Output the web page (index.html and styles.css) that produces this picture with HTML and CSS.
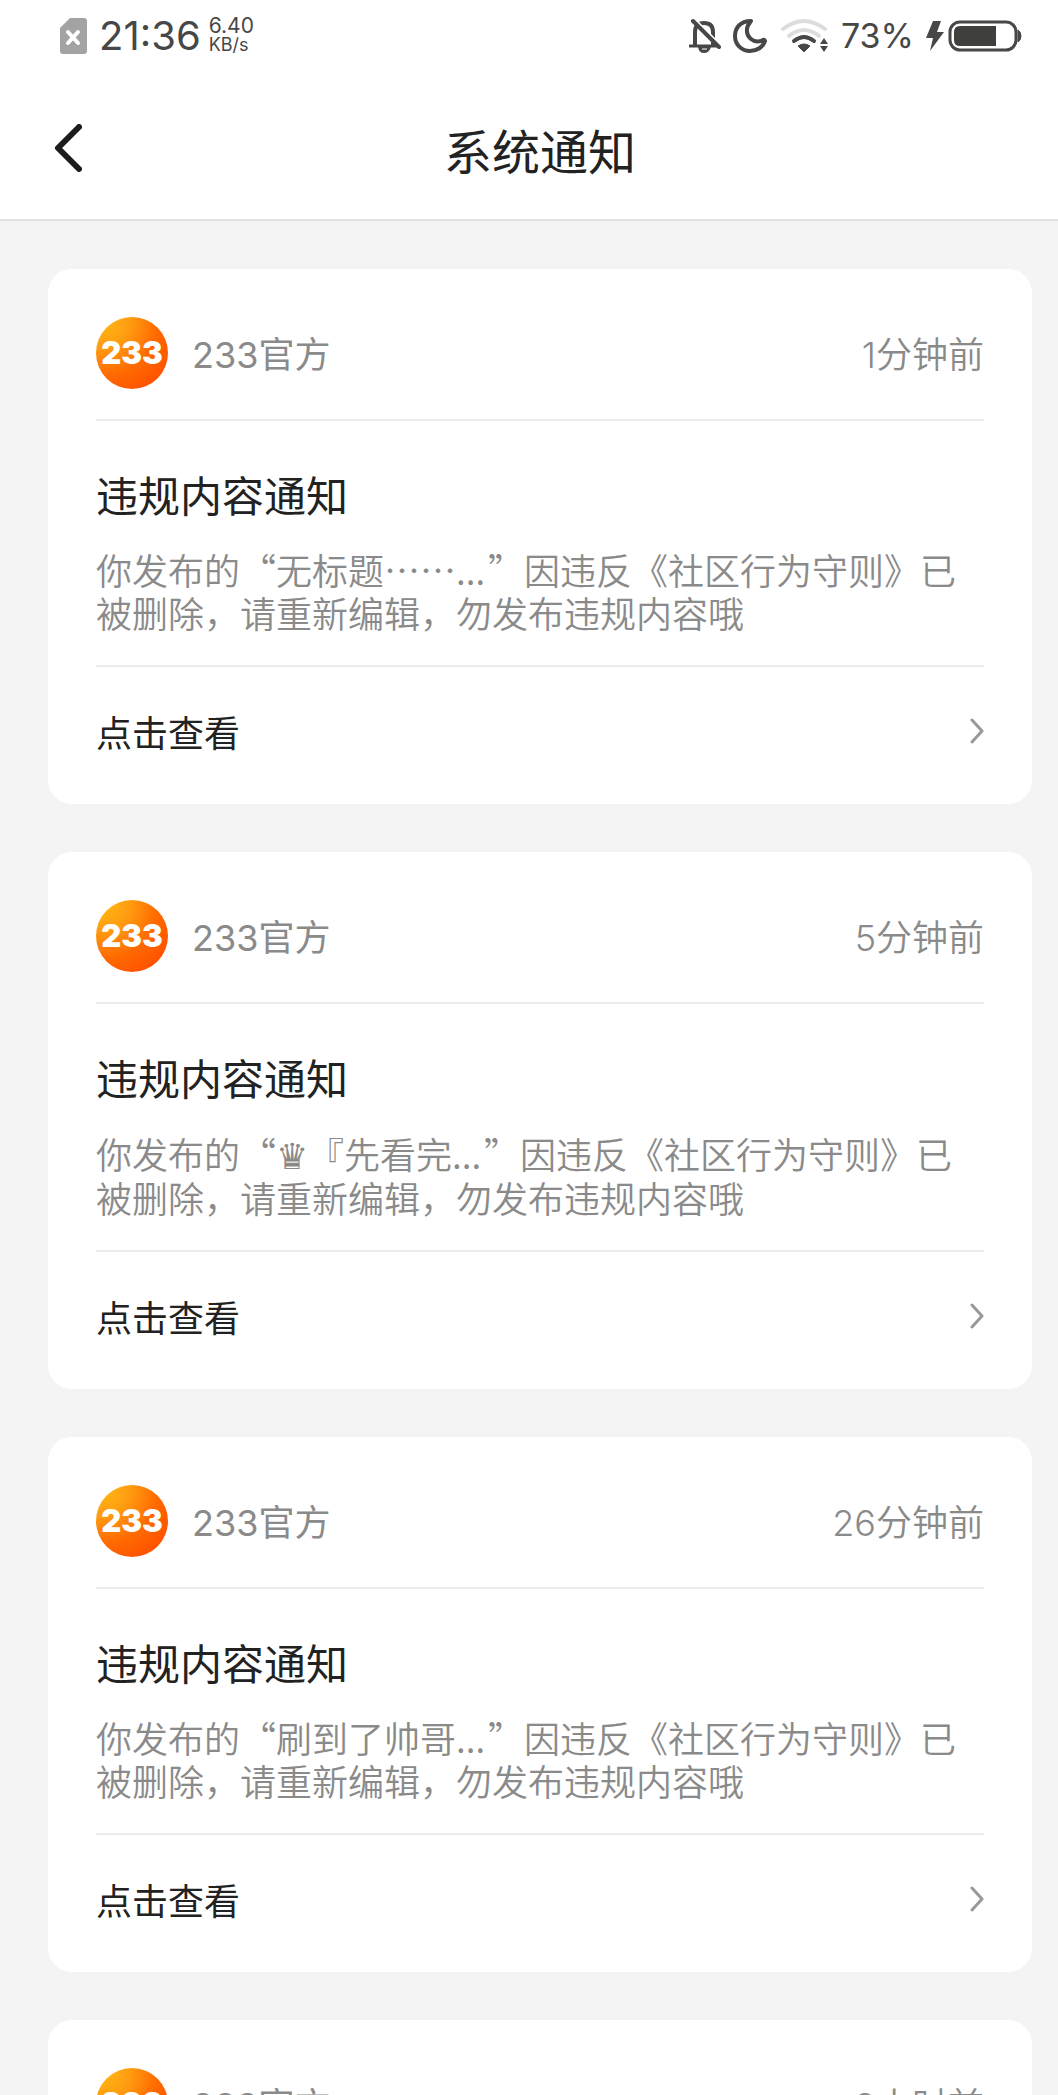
FILE: index.html
```html
<!DOCTYPE html>
<html lang="zh-CN">
<head>
<meta charset="utf-8">
<meta name="viewport" content="width=device-width, initial-scale=1">
<title>系统通知</title>
<link rel="stylesheet" href="styles.css">
</head>
<body>
<svg class="sprite" aria-hidden="true">
  <symbol id="chevron" viewBox="0 0 14 26"><path d="M2 2 L12 13 L2 24" fill="none" stroke="#999" stroke-width="3" stroke-linecap="round" stroke-linejoin="round"/></symbol>
</svg>
<div class="status">
  <div class="status-left">
    <svg width="27" height="36" viewBox="0 0 27 36" role="img" aria-label="无SIM卡"><path d="M10 0H24a3 3 0 0 1 3 3V33a3 3 0 0 1-3 3H3a3 3 0 0 1-3-3V10Z" fill="#a3a3a3"/><path d="M8 14 L18 25 M18 14 L8 25" stroke="#fff" stroke-width="4" stroke-linecap="round"/></svg>
    <span class="clock">21:36</span>
    <span class="speed"><span class="speed-value">6.40</span><span class="speed-unit">KB/s</span></span>
  </div>
  <div class="status-right">
    <svg width="32" height="36" viewBox="0 0 32 36" role="img" aria-label="静音"><g fill="none" stroke="#474747" stroke-width="4"><path d="M6 27V14Q6 5 15 5Q24 5 24 14V27"/><path d="M1 28H29" stroke-linecap="round" stroke-width="3"/></g><path d="M9 29H22Q20 35 15 35Q10 35 9 29Z" fill="#474747"/><path d="M13 31H18" stroke="#fff" stroke-width="1"/><path d="M5 1L31 27" stroke="#fff" stroke-width="3"/><path d="M4 3L30 29" stroke="#474747" stroke-width="4" stroke-linecap="round"/></svg>
    <svg class="moon" width="34" height="34" viewBox="0 0 34 34" role="img" aria-label="勿扰"><path d="M18 2C7 2 2 9 2 17C2 26 9 32 17 32C24 32 30 28 32 22C31 20 30 21 28 22C20 24 13 18 14 10C14 7 16 5 18 2Z" fill="none" stroke="#474747" stroke-width="4" stroke-linejoin="round"/></svg>
    <svg class="wifi" width="48" height="34" viewBox="0 0 48 34" role="img" aria-label="Wi-Fi"><g fill="none" stroke-linecap="round" stroke-width="4"><path d="M2 10Q23 -6 44 10" stroke="#ddd"/><path d="M8 17Q23 5 38 17" stroke="#ddd"/><path d="M13 22Q23 14 33 22" stroke="#474747"/></g><path d="M17 27Q23 23 29 27L23 33Z" fill="#474747" stroke="#474747" stroke-linejoin="round"/><path d="M43 19L47 25H39ZM39 27H47L43 33Z" fill="#474747"/></svg>
    <span class="percent">73%</span>
    <svg class="bolt" width="18" height="30" viewBox="0 0 18 30" role="img" aria-label="充电中"><path d="M7 0H15L11 11H18L4 30L7 17H0Z" fill="#474747"/></svg>
    <svg width="74" height="32" viewBox="0 0 74 32" role="img" aria-label="电量"><rect x="2" y="2" width="66" height="28" rx="10" fill="none" stroke="#474747" stroke-width="3"/><path d="M12 6H48V26H12Q6 26 6 20V12Q6 6 12 6Z" fill="#3f403b"/><path d="M70 10Q73 12 73 16Q73 20 70 22Z" fill="#474747" stroke="#474747"/></svg>
  </div>
</div>
<header class="bar">
  <button class="back" type="button" aria-label="返回"><svg width="28" height="48" viewBox="0 0 28 48"><path d="M25 3L4 24L25 45" fill="none" stroke="#1c1c1c" stroke-width="6" stroke-linecap="round" stroke-linejoin="round"/></svg></button>
  <h1>系统通知</h1>
</header>
<main class="list">
  <article class="card">
    <div class="from"><span class="avatar">233</span><span class="name">233官方</span><time>1分钟前</time></div>
    <div class="content"><h2>违规内容通知</h2><p>你发布的“无标题……<span class="dots">...</span>”因违反《社区行为守则》已被删除，请重新编辑，勿发布违规内容哦</p></div>
    <a class="more" href="#post-1">点击查看<svg width="14" height="26"><use href="#chevron"/></svg></a>
  </article>
  <article class="card">
    <div class="from"><span class="avatar">233</span><span class="name">233官方</span><time>5分钟前</time></div>
    <div class="content"><h2>违规内容通知</h2><p>你发布的“<span class="symbol">♛</span>『先看完<span class="dots">...</span>”因违反《社区行为守则》已被删除，请重新编辑，勿发布违规内容哦</p></div>
    <a class="more" href="#post-2">点击查看<svg width="14" height="26"><use href="#chevron"/></svg></a>
  </article>
  <article class="card">
    <div class="from"><span class="avatar">233</span><span class="name">233官方</span><time>26分钟前</time></div>
    <div class="content"><h2>违规内容通知</h2><p>你发布的“刷到了帅哥<span class="dots">...</span>”因违反《社区行为守则》已被删除，请重新编辑，勿发布违规内容哦</p></div>
    <a class="more" href="#post-3">点击查看<svg width="14" height="26"><use href="#chevron"/></svg></a>
  </article>
  <article class="card">
    <div class="from"><span class="avatar">233</span><span class="name">233官方</span><time>2小时前</time></div>
  </article>
</main>
</body>
</html>
```
FILE: styles.css
```css
* { box-sizing: border-box; }
body {
  margin: 0;
  height: 100vh;
  display: flex;
  flex-direction: column;
  overflow: hidden;
  background: #f4f4f4;
  color: #222;
  font-family: Inter, "Noto Sans CJK SC", sans-serif;
}
h1, h2, p { margin: 0; }
svg { display: block; flex: none; }
.sprite { position: absolute; width: 0; height: 0; }

.status {
  flex: none;
  display: flex;
  justify-content: space-between;
  height: 72px;
  padding: 0 36px 0 60px;
  background: #fff;
  color: #474747;
}
.status-left, .status-right { display: flex; align-items: center; }
.clock { margin-left: 12px; font-size: 40px; line-height: 48px; }
.speed { display: flex; flex-direction: column; margin-left: 8px; }
.speed-value { font-size: 21px; line-height: 18px; }
.speed-unit { font-size: 18px; line-height: 20px; }
.moon { margin-left: 12px; }
.wifi { margin-left: 14px; }
.percent { margin-left: 12px; font-size: 34px; line-height: 40px; }
.bolt { margin: 0 4px 0 12px; }

.bar {
  flex: none;
  display: grid;
  grid-template-columns: 90px 1fr 90px;
  align-items: center;
  height: 149px;
  padding: 4px 0 0 22px;
  border-bottom: 2px solid #e2e2e2;
  background: #fff;
}
.back {
  justify-self: end;
  margin-right: 30px;
  padding: 0;
  border: 0;
  background: none;
}
h1 {
  padding-top: 10px;
  text-align: center;
  font-size: 48px;
  line-height: 60px;
  font-weight: 400;
}

.list {
  flex: 1;
  min-height: 0;
  overflow-y: auto;
  scrollbar-width: none;
  display: flex;
  flex-direction: column;
  gap: 48px;
  padding: 48px 26px 48px 48px;
}
.card {
  flex: none;
  padding: 0 48px;
  border-radius: 24px;
  background: #fff;
}
.from {
  display: flex;
  align-items: center;
  padding: 48px 0 30px;
  color: #8a8a8a;
  font-size: 36px;
  line-height: 68px;
}
.avatar {
  width: 72px;
  height: 72px;
  border-radius: 50%;
  background: radial-gradient(circle at 10% 5%, #ffb916 0%, #ff9a10 30%, #ff6a00 58%, #ff4c00 90%);
  color: #fff;
  text-align: center;
  font-family: Inter, sans-serif;
  font-size: 31px;
  line-height: 72px;
  font-weight: 900;
}
.name, time { padding-top: 4px; }
.name { margin-left: 24px; }
time { margin-left: auto; font-weight: 350; }
.content {
  padding: 46px 0 31px;
  border-top: 2px solid #ebebeb;
  border-bottom: 2px solid #ebebeb;
}
h2 {
  margin-bottom: 21px;
  font-size: 42px;
  line-height: 60px;
  font-weight: 400;
}
p {
  color: #8a8a8a;
  font-family: "Noto Sans CJK SC", sans-serif;
  font-size: 36px;
  line-height: 43px;
  font-weight: 350;
}
.symbol { line-height: 45px; }
.dots { margin-right: 3px; }
.more {
  display: flex;
  align-items: center;
  justify-content: space-between;
  height: 137px;
  padding-bottom: 4px;
  color: #222;
  font-size: 36px;
  line-height: 54px;
  text-decoration: none;
}
.more svg { margin-bottom: 6px; }
```
